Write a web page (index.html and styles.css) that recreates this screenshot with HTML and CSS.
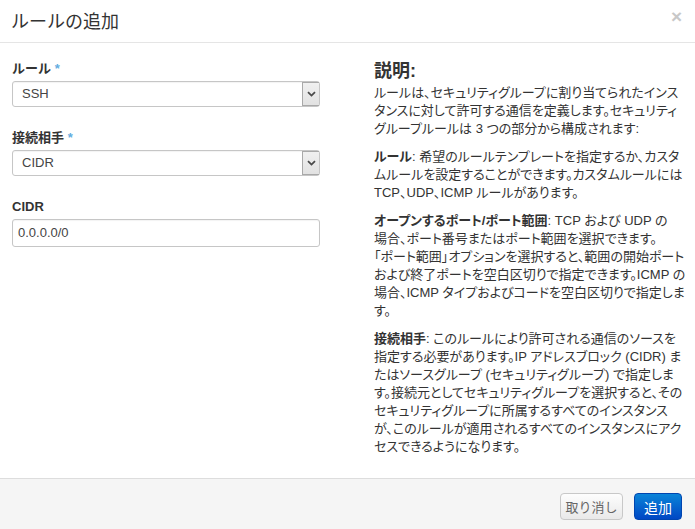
FILE: index.html
```html
<!DOCTYPE html>
<html lang="ja">
<head>
<meta charset="utf-8">
<link rel="stylesheet" href="styles.css">
</head>
<body>
<div class="modal">
  <div class="modal-header">
    <h3 class="modal-title">ルールの追加</h3>
    <span class="close">×</span>
  </div>
  <div class="modal-body">
    <div class="form-col">
      <div class="form-group">
        <label class="field-label">ルール <span class="req">*</span></label>
        <div class="select">
          <span class="select-value">SSH</span>
          <span class="select-arrow"><svg width="9" height="6" viewBox="0 0 9 6"><path d="M1 1.2 L4.5 4.6 L8 1.2" fill="none" stroke="#4a4a4a" stroke-width="1.8"/></svg></span>
        </div>
      </div>
      <div class="form-group">
        <label class="field-label">接続相手 <span class="req">*</span></label>
        <div class="select">
          <span class="select-value">CIDR</span>
          <span class="select-arrow"><svg width="9" height="6" viewBox="0 0 9 6"><path d="M1 1.2 L4.5 4.6 L8 1.2" fill="none" stroke="#4a4a4a" stroke-width="1.8"/></svg></span>
        </div>
      </div>
      <div class="form-group">
        <label class="field-label">CIDR</label>
        <div class="text-input">0.0.0.0/0</div>
      </div>
    </div>
    <div class="help-col">
      <h3 class="help-title">説明:</h3>
      <p class="help-text">ルールは、セキュリティグループに割り当てられたインス<br>タンスに対して許可する通信を定義します。セキュリティ<br>グループルールは 3 つの部分から構成されます:</p>
      <p class="help-text"><b>ルール</b>: 希望のルールテンプレートを指定するか、カスタ<br>ムルールを設定することができます。カスタムルールには<br>TCP、UDP、ICMP ルールがあります。</p>
      <p class="help-text"><b>オープンするポート/ポート範囲</b>: TCP および UDP の<br>場合、ポート番号またはポート範囲を選択できます。<br>「ポート範囲」オプションを選択すると、範囲の開始ポート<br>および終了ポートを空白区切りで指定できます。ICMP の<br>場合、ICMP タイプおよびコードを空白区切りで指定しま<br>す。</p>
      <p class="help-text"><b>接続相手</b>: このルールにより許可される通信のソースを<br>指定する必要があります。IP アドレスブロック (CIDR) ま<br>たはソースグループ (セキュリティグループ) で指定しま<br>す。接続元としてセキュリティグループを選択すると、その<br>セキュリティグループに所属するすべてのインスタンス<br>が、このルールが適用されるすべてのインスタンスにアク<br>セスできるようになります。</p>
    </div>
  </div>
  <div class="modal-footer">
    <button class="btn btn-default">取り消し</button>
    <button class="btn btn-primary">追加</button>
  </div>
</div>
</body>
</html>
```
FILE: styles.css
```css
html, body {
  margin: 0;
  padding: 0;
  background: #fff;
}
body {
  font-family: "Liberation Sans", "Noto Sans CJK JP", sans-serif;
  color: #333;
  font-size: 13px;
}
.modal {
  width: 695px;
  height: 529px;
  display: flex;
  flex-direction: column;
  background: #fff;
  overflow: hidden;
}
.modal-header {
  height: 42px;
  flex: none;
  display: flex;
  align-items: center;
  justify-content: space-between;
  padding: 0 13px 0 11px;
  border-bottom: 1px solid #e5e5e5;
}
.modal-title {
  margin: -3px 0 0;
  font-size: 18px;
  font-weight: normal;
  line-height: 26px;
  color: #333;
  font-family: "Noto Sans CJK JP", sans-serif;
}
.close {
  font-family: "Liberation Sans", sans-serif;
  font-size: 19px;
  font-weight: bold;
  line-height: 20px;
  color: #c8c8c8;
  margin-top: -8px;
}
.modal-body {
  flex: 1;
  display: grid;
  grid-template-columns: 308px 1fr;
  column-gap: 54px;
  padding: 17px 7px 0 12px;
}
.form-group {
  margin-bottom: 22px;
}
.field-label {
  display: block;
  font-weight: bold;
  font-size: 13px;
  line-height: 17px;
  margin-bottom: 4px;
  color: #333;
}
.req {
  color: #62ade0;
  font-weight: bold;
}
.select {
  height: 24px;
  border: 1px solid #c6c6c6;
  border-radius: 3px;
  display: flex;
  align-items: stretch;
  background: #fff;
  box-shadow: inset 0 1px 1px rgba(0,0,0,0.05);
}
.select-value {
  flex: 1;
  padding-left: 9px;
  line-height: 24px;
  font-size: 13px;
  color: #444;
}
.select-arrow {
  width: 16px;
  display: flex;
  align-items: center;
  justify-content: center;
  background: linear-gradient(#f0f0f0, #e2e2e2);
  border-left: 1px solid #a9a9a9;
  border-top: 1px solid #a9a9a9;
  border-bottom: 1px solid #a9a9a9;
}
.text-input {
  height: 26px;
  border: 1px solid #c6c6c6;
  border-radius: 3px;
  padding-left: 5px;
  line-height: 26px;
  font-size: 13px;
  color: #444;
  box-shadow: inset 0 1px 1px rgba(0,0,0,0.05);
}
.help-col {
  white-space: nowrap;
}
.help-title {
  margin: 0 0 2px;
  font-size: 18px;
  line-height: 22px;
  font-weight: bold;
  color: #333;
}
.help-text {
  margin: 0 0 10px;
  font-size: 13px;
  line-height: 18px;
  color: #333;
  font-feature-settings: "palt";
}
.help-text b {
  font-weight: bold;
}
.modal-footer {
  flex: none;
  box-sizing: border-box;
  height: 51px;
  background: #f5f5f5;
  border-top: 1px solid #ddd;
  display: flex;
  justify-content: flex-end;
  align-items: flex-start;
  gap: 11px;
  padding: 14px 13px 0 0;
}
.btn {
  height: 27px;
  border-radius: 4px;
  font-family: "Noto Sans CJK JP", sans-serif;
  cursor: pointer;
  padding: 0;
}
.btn-default {
  width: 63px;
  font-size: 13px;
  color: #666;
  background: linear-gradient(#fdfdfd, #e9e9e9);
  border: 1px solid #c8c8c8;
}
.btn-primary {
  width: 48px;
  font-size: 14px;
  color: #fff;
  background: linear-gradient(#0a84d8, #0047c4);
  border: 1px solid #0045b0;
}
```
